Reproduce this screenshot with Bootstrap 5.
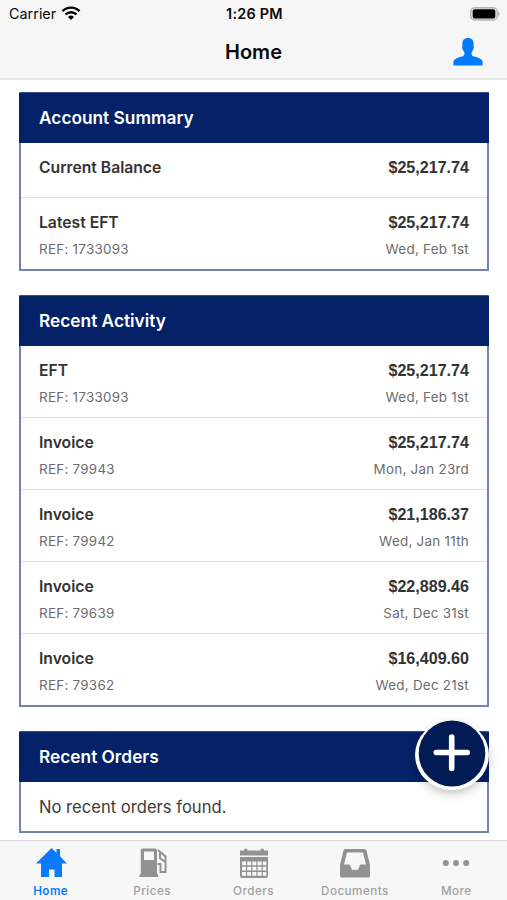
<!DOCTYPE html>
<html lang="en">
<head>
<meta charset="utf-8">
<meta name="viewport" content="width=device-width, initial-scale=1">
<title>Home</title>
<link href="https://cdn.jsdelivr.net/npm/bootstrap@5.3.0/dist/css/bootstrap.min.css" rel="stylesheet">
<style>
body{font-family:Inter,"Liberation Sans",sans-serif;color:#333;height:900px;overflow:hidden;background:#fff}
svg{display:block}
.app{height:900px}
.topbar{height:80px;background:#f6f6f6;border-bottom:2px solid #e6e6e6;color:#0a0a0a}
.status{height:28px;font-size:14.4px;line-height:28px;padding:0 7px 0 9px}
.status>div{flex:1 1 0}
.status .wifi{margin-left:5px;margin-top:-2px}
.clock{font-weight:600;letter-spacing:.25px}
.title-row{height:49px;padding:0 24px}
.title-row>div{flex:1 1 0}
.title-row svg{margin-top:-2px}
.page-title{font-size:20px;font-weight:600;line-height:49px;margin:0;letter-spacing:0}
.content{padding:12px 18px 0 19px;gap:24px}
.panel{border:2px solid #7482b0;border-top:1px solid #3a4d88}
.panel-head{background:#052268;color:#fff;height:50px;line-height:50px;font-size:17.3px;font-weight:600;padding:0 20px;margin:0 -2px}
.panel-row{padding:14px 18px 0 18px;height:72px;border-bottom:1px solid #dedfe4}
.panel-row:last-child{border-bottom:0;height:71px}
.panel-row.short{height:55px}
.label{font-size:15.7px;font-weight:600;line-height:22px}
.amount{font-family:"Liberation Sans",sans-serif;font-size:16.1px;font-weight:700;line-height:20px;padding-bottom:2px}
.sub{font-size:13.4px;line-height:20px;margin-top:4.5px;color:#6c6c6c;letter-spacing:.27px}
.empty{font-size:16.6px;line-height:51px;height:49px;padding:0 18px;color:#3d3d3d}
.fab{position:absolute;right:18px;top:720px;width:74px;height:70px;z-index:2;padding:0;border:0;background:none;filter:drop-shadow(0 4px 5px rgba(0,0,0,.22))}
.tabs{position:relative;z-index:3;height:60px;background:#f7f7f7;border-top:1px solid #d9d9de}
.tabs .tab{flex:1 1 0;font-size:11.7px;font-weight:500;line-height:14px;color:#a0a0a0;padding-top:7px;text-decoration:none;letter-spacing:.45px}
.tabs .tab.active{color:#0a7bff;font-weight:600}
.tabs svg{margin-bottom:5px;color:#929292}
.tabs .active svg{color:#0a7bff}
</style>
</head>
<body>
<div class="app d-flex flex-column position-relative">
  <header class="topbar flex-shrink-0">
    <div class="status d-flex align-items-center">
      <div class="d-flex align-items-center"><span class="carrier">Carrier</span>
        <svg class="wifi" width="20" height="15" viewBox="0 0 20 15" fill="none" stroke="#000" stroke-width="2.4"><path d="M1.500 5.200a12 12 0 0 1 17 0M4.500 8.500a7.800 7.800 0 0 1 11 0"/><path d="M10 14l-3-3a4.300 4.300 0 0 1 6 0z" fill="#000" stroke="none"/></svg>
      </div>
      <div class="clock text-center">1:26 PM</div>
      <div class="d-flex justify-content-end">
        <svg width="31" height="15" viewBox="0 0 31 15"><rect x="1.700" y=".8" width="26.600" height="12.200" rx="4" fill="#e4e4e4" stroke="#b4b4b4" stroke-width="1.400"/><rect x="3.700" y="2.300" width="22.600" height="9.200" rx="2" fill="#000"/><path d="M29.300 4.500v5c1.800-.8 1.800-4.200 0-5z" fill="#b4b4b4"/></svg>
      </div>
    </div>
    <div class="title-row d-flex align-items-center">
      <div></div>
      <h1 class="page-title text-center">Home</h1>
      <div class="d-flex justify-content-end">
        <svg width="30" height="28" viewBox="0 0 30 28" fill="#007aff"><path d="M15 0c3.700 0 5.600 2.200 5.600 5.600v2.800c.5.900.1 2.600-.6 3.300-.3 1.200-.8 2-1.400 2.700v2.300c.4.900 1.600 1.500 3.600 2.100 3.400 1 6 2.200 7 3.700.6 1 .5 3.200.3 4.500q-.1.500-.6.500H1.100q-.5 0-.6-.5C.3 25.700.2 23.500.8 22.500c1-1.500 3.600-2.700 7-3.700 2-.6 3.200-1.200 3.600-2.100v-2.300c-.6-.7-1.100-1.500-1.400-2.700-.7-.7-1.100-2.400-.6-3.300V5.600C9.400 2.200 11.300 0 15 0z"/></svg>
      </div>
    </div>
  </header>

  <main class="content d-flex flex-column flex-grow-1">
    <section class="panel">
      <h2 class="panel-head mb-0">Account Summary</h2>
      <div class="panel-row short d-flex justify-content-between"><div class="label">Current Balance</div><div class="amount">$25,217.74</div></div>
      <div class="panel-row d-flex justify-content-between"><div><div class="label">Latest EFT</div><div class="sub">REF: 1733093</div></div><div class="text-end"><div class="amount">$25,217.74</div><div class="sub">Wed, Feb 1st</div></div></div>
    </section>
    <section class="panel">
      <h2 class="panel-head mb-0">Recent Activity</h2>
      <div class="panel-row d-flex justify-content-between"><div><div class="label">EFT</div><div class="sub">REF: 1733093</div></div><div class="text-end"><div class="amount">$25,217.74</div><div class="sub">Wed, Feb 1st</div></div></div>
      <div class="panel-row d-flex justify-content-between"><div><div class="label">Invoice</div><div class="sub">REF: 79943</div></div><div class="text-end"><div class="amount">$25,217.74</div><div class="sub">Mon, Jan 23rd</div></div></div>
      <div class="panel-row d-flex justify-content-between"><div><div class="label">Invoice</div><div class="sub">REF: 79942</div></div><div class="text-end"><div class="amount">$21,186.37</div><div class="sub">Wed, Jan 11th</div></div></div>
      <div class="panel-row d-flex justify-content-between"><div><div class="label">Invoice</div><div class="sub">REF: 79639</div></div><div class="text-end"><div class="amount">$22,889.46</div><div class="sub">Sat, Dec 31st</div></div></div>
      <div class="panel-row d-flex justify-content-between"><div><div class="label">Invoice</div><div class="sub">REF: 79362</div></div><div class="text-end"><div class="amount">$16,409.60</div><div class="sub">Wed, Dec 21st</div></div></div>
    </section>
    <section class="panel">
      <h2 class="panel-head mb-0">Recent Orders</h2>
      <div class="empty">No recent orders found.</div>
    </section>
  </main>

  <button class="fab" type="button" aria-label="Add">
    <svg width="74" height="70" viewBox="0 0 74 70"><ellipse cx="37" cy="35" rx="37" ry="35" fill="#fff"/><ellipse cx="37" cy="33.500" rx="33.300" ry="33" fill="#021b55"/><path d="M36.700 17v31.500M21.300 32.500h31" stroke="#fff" stroke-width="5.600" stroke-linecap="round"/></svg>
  </button>

  <nav class="tabs d-flex flex-shrink-0">
    <a class="tab active d-flex flex-column align-items-center" href="#">
      <svg width="32" height="31" viewBox="0 0 32 31" fill="currentColor"><path d="M16.500 0l5 4.800V1h3.500v7.200L32 15.500H27V29h-7.500v-7.500h-5.500V29H6V15.500H1z"/></svg>Home</a>
    <a class="tab d-flex flex-column align-items-center" href="#">
      <svg width="32" height="31" viewBox="0 0 32 31" fill="currentColor"><path fill-rule="evenodd" d="M6.500 .5h12.500q2 0 2 2v23l1.200 1.500V29H3.500v-2L4.800 25.500V2.500q0-2 1.700-2zM8 3.500V12h10V3.500z"/><path d="M22 2l7.500 6.500V24h-5v-8H21.500M24 4.200v6l5 3.500" fill="none" stroke="currentColor" stroke-width="2"/></svg>Prices</a>
    <a class="tab d-flex flex-column align-items-center" href="#">
      <svg width="32" height="31" viewBox="0 0 32 31" fill="currentColor"><path d="M2 2.500h4V2q0-1.500 1.800-1.500T9.600 2v.5h12.800V2q0-1.500 1.800-1.500T26 2v.500h4V7.500H2z"/><path fill-rule="evenodd" d="M2 9h28V28q0 2-2 2H4q-2 0-2-2zM4 13.500v3.800h4v-3.800zm5.200 0v3.800h4v-3.800zm5.200 0v3.800h4v-3.800zm5.200 0v3.800h4v-3.800zm5.200 0v3.800h3.500v-3.800zM4 18.700v3.800h4v-3.800zm5.200 0v3.800h4v-3.800zm5.200 0v3.800h4v-3.800zm5.200 0v3.800h4v-3.800zm5.200 0v3.800h3.500v-3.800zM4 24v3.800h4V24zm5.200 0v3.800h4V24zm5.200 0v3.800h4V24zm5.200 0v3.800h4V24zm5.200 0v3.800h3.500V24z"/></svg>Orders</a>
    <a class="tab d-flex flex-column align-items-center" href="#">
      <svg width="32" height="31" viewBox="0 0 32 31" fill="currentColor"><path fill-rule="evenodd" d="M6.500 1h19q1.500 0 2 1.500L31 17v11q0 1.500-1.500 1.500h-27Q1 29.500 1 28V17L4.500 2.500Q5 1 6.500 1zm1.500 3.500L5 16.500h5q1 0 1.400 1.300l1.600 4h6l1.600-4q.4-1.300 1.400-1.300h5L24 4.500z"/></svg>Documents</a>
    <a class="tab d-flex flex-column align-items-center" href="#">
      <svg width="32" height="31" viewBox="0 0 32 31" fill="currentColor"><circle cx="5.800" cy="15" r="3"/><circle cx="16" cy="15" r="3"/><circle cx="26.200" cy="15" r="3"/></svg>More</a>
  </nav>
</div>
<script src="https://cdn.jsdelivr.net/npm/bootstrap@5.3.0/dist/js/bootstrap.bundle.min.js"></script>
</body>
</html>
